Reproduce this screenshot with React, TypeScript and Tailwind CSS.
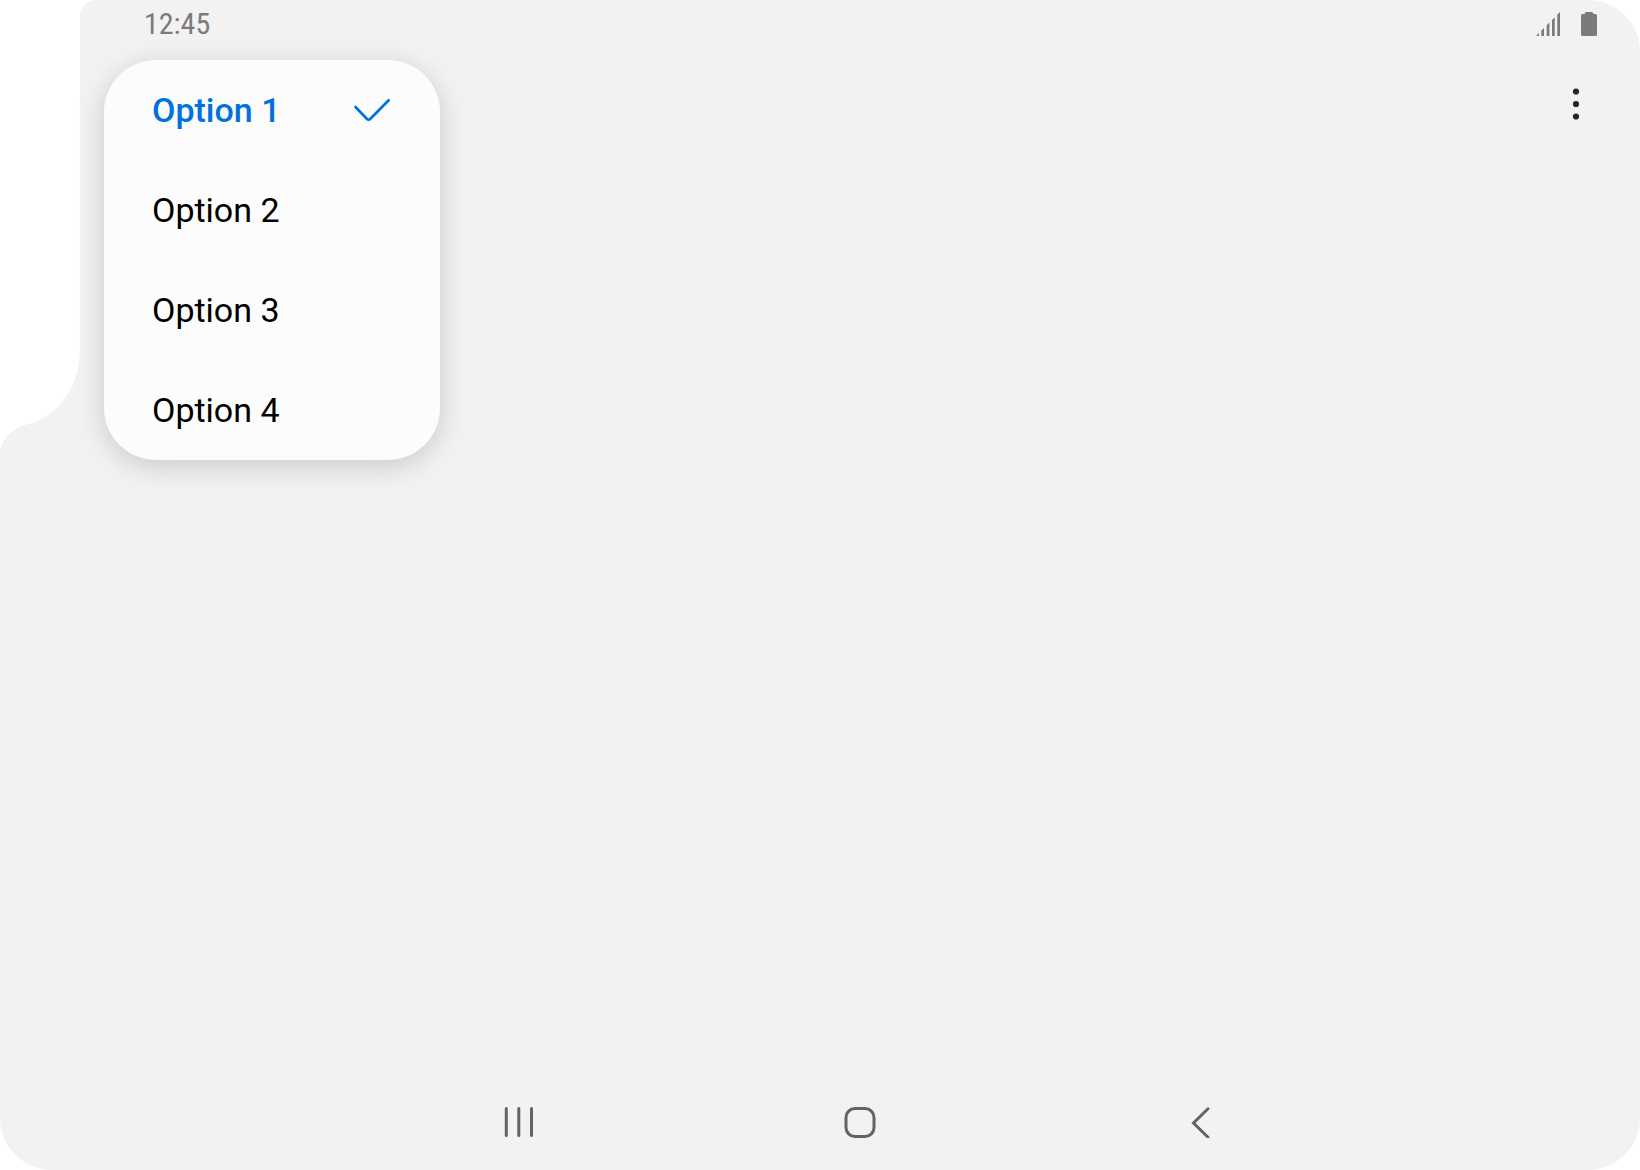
import { useState } from "react";

const OPTIONS = ["Option 1", "Option 2", "Option 3", "Option 4"];

function HingeCutout() {
  return (
    <svg className="pointer-events-none absolute left-0 top-0" width="96" height="456" viewBox="0 0 96 456" aria-hidden="true">
      <path
        d="M0 0H96A16 16 0 0 0 80 16V349C80 385 60 416 29 424C12 428 0 439 0 456Z"
        fill="#ffffff"
      />
    </svg>
  );
}

function SignalIcon() {
  return (
    <svg className="h-6 w-6" viewBox="0 0 24 24" fill="#7b7b7b" aria-label="Signal strength" role="img">
      <path d="M0 24L3 21V24ZM5.300 24V18.700L8 16V24ZM10.700 24V13.300L13.400 10.600V24ZM16 24V8L18.700 5.300V24ZM21.300 24V2.700L24 0V24Z" />
    </svg>
  );
}

function BatteryIcon() {
  return (
    <svg className="h-6 w-4" viewBox="0 0 16 24" fill="#7b7b7b" aria-label="Battery" role="img">
      <path d="M5 0H11Q12 0 12.500 2H14.500Q16 2 16 3.500V22.500Q16 24 14.500 24H1.500Q0 24 0 22.500V3.500Q0 2 1.500 2H3.500Q4 0 5 0Z" />
    </svg>
  );
}

function StatusBar() {
  return (
    <header className="flex h-12 items-center justify-between pl-36 pr-[43px]">
      <time className="font-['Roboto_Condensed',Roboto,sans-serif] text-[30px] leading-8 text-[#7b7b7b]">12:45</time>
      <div className="flex items-center gap-[21px]">
        <SignalIcon />
        <BatteryIcon />
      </div>
    </header>
  );
}

function OptionsMenu() {
  const [selected, setSelected] = useState(OPTIONS[0]);
  return (
    <div
      role="menu"
      aria-label="Options"
      className="flex w-84 flex-col overflow-hidden rounded-[52px] bg-[#fcfcfc] shadow-[0_6px_28px_rgba(0,0,0,0.17)]"
    >
      {OPTIONS.map((option) => {
        const active = option === selected;
        return (
          <button
            key={option}
            type="button"
            role="menuitemradio"
            aria-checked={active}
            onClick={() => setSelected(option)}
            className={
              active
                ? "flex h-25 items-center justify-between px-12 text-left text-[34px] leading-10 font-medium text-[#0072de]"
                : "flex h-25 items-center justify-between px-12 text-left text-[34px] leading-10 text-black"
            }
          >
            {option}
            {active && (
              <svg className="h-10 w-10" viewBox="0 0 40 40" fill="none" stroke="#0072de" strokeWidth="2.700" strokeLinecap="round" strokeLinejoin="round" aria-hidden="true">
                <path d="M3.500 17L14.800 28.800Q16.600 30.600 18.400 28.800L36.700 10.200" />
              </svg>
            )}
          </button>
        );
      })}
    </div>
  );
}

function NavigationBar() {
  return (
    <nav className="pl-20" aria-label="System navigation">
      <div className="mx-auto grid h-24 max-w-5xl grid-cols-3 place-items-center">
        <button type="button" aria-label="Recent apps" className="p-4">
          <svg className="h-8 w-8" viewBox="0 0 32 32" fill="none" stroke="#636363" strokeWidth="3" strokeLinecap="round" aria-hidden="true">
            <path d="M3.300 2.500V29.500M15.800 2.500V29.500M28.500 2.500V29.500" />
          </svg>
        </button>
        <button type="button" aria-label="Home" className="p-4">
          <svg className="h-8 w-8" viewBox="0 0 32 32" fill="none" stroke="#636363" strokeWidth="3" aria-hidden="true">
            <rect x="2" y="2.500" width="28" height="28" rx="9" />
          </svg>
        </button>
        <button type="button" aria-label="Back" className="p-4">
          <svg className="h-8 w-8" viewBox="0 0 32 32" fill="none" stroke="#636363" strokeWidth="3" strokeLinecap="round" aria-hidden="true">
            <path d="M23 2.800L8.500 17L23 31.200" />
          </svg>
        </button>
      </div>
    </nav>
  );
}

export default function App() {
  return (
    <div className="min-h-screen bg-white font-[Roboto,sans-serif]">
      <div className="relative flex min-h-screen flex-col rounded-[52px] bg-[#f2f2f2]">
        <HingeCutout />
        <div className="relative flex flex-1 flex-col">
          <StatusBar />
          <main className="flex flex-1 items-start justify-between pl-26 pr-8 pt-3">
            <OptionsMenu />
            <button type="button" aria-label="More options" className="flex h-22 w-16 items-center justify-center">
              <svg className="h-10 w-10" viewBox="0 0 40 40" fill="#252525" aria-hidden="true">
                <circle cx="20" cy="7.500" r="3.100" />
                <circle cx="20" cy="20" r="3.100" />
                <circle cx="20" cy="32.500" r="3.100" />
              </svg>
            </button>
          </main>
          <NavigationBar />
        </div>
      </div>
    </div>
  );
}
